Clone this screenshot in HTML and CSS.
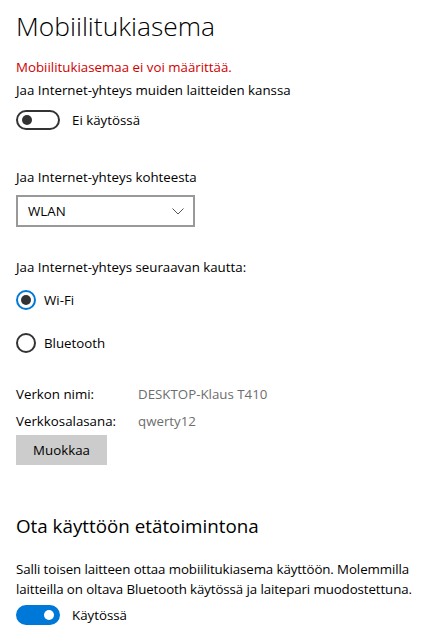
FILE: index.html
```html
<!DOCTYPE html>
<html lang="fi">
<head>
  <meta charset="UTF-8">
  <title>Mobiilitukiasema</title>
  <link rel="stylesheet" href="styles.css">
</head>
<body>
  <main class="page">
    <h1 class="title">Mobiilitukiasema</h1>
    <p class="error">Mobiilitukiasemaa ei voi määrittää.</p>
    <p class="label">Jaa Internet-yhteys muiden laitteiden kanssa</p>
    <div class="toggle-row">
      <span class="toggle"></span>
      <span>Ei käytössä</span>
    </div>

    <p class="label source-label">Jaa Internet-yhteys kohteesta</p>
    <div class="select">
      <span>WLAN</span>
      <svg class="chevron" width="12" height="7" viewBox="0 0 12 7">
        <polyline points="0.5,0.5 6,6 11.5,0.5" fill="none" stroke="#555" stroke-width="1"/>
      </svg>
    </div>

    <p class="label via-label">Jaa Internet-yhteys seuraavan kautta:</p>
    <div class="radio-row">
      <span class="radio checked"></span>
      <span>Wi-Fi</span>
    </div>
    <div class="radio-row second">
      <span class="radio"></span>
      <span>Bluetooth</span>
    </div>

    <div class="info">
      <span>Verkon nimi:</span>
      <span class="value">DESKTOP-Klaus T410</span>
      <span>Verkkosalasana:</span>
      <span class="value">qwerty12</span>
    </div>
    <button class="edit">Muokkaa</button>

    <h2 class="subtitle">Ota käyttöön etätoimintona</h2>
    <p class="desc">Salli toisen laitteen ottaa mobiilitukiasema käyttöön. Molemmilla laitteilla on oltava Bluetooth käytössä ja laitepari muodostettuna.</p>
    <div class="toggle-row last">
      <span class="toggle on"></span>
      <span>Käytössä</span>
    </div>
  </main>
</body>
</html>
```

FILE: styles.css
```css
body {
  margin: 0;
  background: #fff;
  color: #000;
  font-family: 'Open Sans', 'Noto Sans', Arial, sans-serif;
  font-size: 13.3px;
  line-height: 20px;
}
.page {
  padding: 6px 0 0 16px;
}
p {
  margin: 0;
}
.title {
  margin: 0;
  font-size: 26.4px;
  font-weight: 300;
  line-height: 40px;
}
.error {
  margin-top: 11px;
  color: #d00000;
}
.label {
  margin-top: 3px;
}
.toggle-row {
  display: flex;
  align-items: center;
  gap: 12px;
  height: 20px;
  margin-top: 10px;
}
.toggle {
  position: relative;
  box-sizing: border-box;
  width: 44px;
  height: 20px;
  border: 2px solid #333;
  border-radius: 10px;
}
.toggle::after {
  content: "";
  position: absolute;
  top: 3px;
  left: 4px;
  width: 10px;
  height: 10px;
  border-radius: 50%;
  background: #333;
}
.toggle.on {
  border-color: #0078d7;
  background: #0078d7;
}
.toggle.on::after {
  left: auto;
  right: 4px;
  background: #fff;
}
.source-label {
  margin-top: 37px;
}
.select {
  box-sizing: border-box;
  display: flex;
  align-items: center;
  justify-content: space-between;
  width: 179px;
  height: 32px;
  margin-top: 8px;
  padding: 0 9px 0 10px;
  border: 2px solid #999;
}
.via-label {
  margin-top: 30px;
}
.radio-row {
  display: flex;
  align-items: center;
  gap: 8px;
  height: 20px;
  margin-top: 13px;
}
.radio-row.second {
  margin-top: 23px;
}
.radio {
  position: relative;
  box-sizing: border-box;
  width: 20px;
  height: 20px;
  border: 2px solid #333;
  border-radius: 50%;
}
.radio.checked {
  border-color: #0078d7;
}
.radio.checked::after {
  content: "";
  position: absolute;
  top: 3px;
  left: 3px;
  width: 10px;
  height: 10px;
  border-radius: 50%;
  background: #333;
}
.info {
  display: grid;
  grid-template-columns: 122px auto;
  row-gap: 7px;
  margin-top: 31px;
}
.value {
  color: #6e6e6e;
}
.edit {
  display: block;
  width: 91px;
  height: 30px;
  margin-top: 4px;
  padding: 0;
  border: none;
  background: #ccc;
  color: #000;
  font: inherit;
}
.subtitle {
  margin: 47px 0 0;
  font-size: 18.8px;
  font-weight: 400;
  line-height: 28px;
}
.desc {
  margin-top: 19px;
  letter-spacing: -0.1px;
}
.toggle-row.last {
  margin-top: 6px;
}
```
